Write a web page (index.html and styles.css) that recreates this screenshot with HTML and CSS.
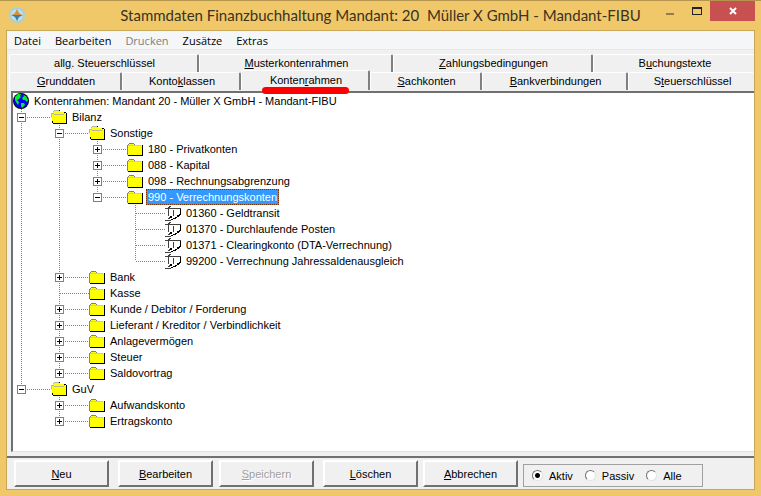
FILE: index.html
```html
<!DOCTYPE html>
<html lang="de">
<head>
    <meta charset="UTF-8">
    <meta name="viewport" content="width=device-width, initial-scale=1.0">
    <title>Stammdaten Finanzbuchhaltung</title>
    <link rel="stylesheet" href="styles.css">
</head>
<body>
    <!-- shared icons -->
    <svg class="defs" width="0" height="0">
        <symbol id="folder" viewBox="0 0 16 16" shape-rendering="crispEdges">
            <path d="M1 4h1v-1h1v-1h4v1h1v1h7v10h-14z" fill="#ffff00"/>
            <path d="M0 4h1v10h-1zM1 3h1v1h-1zM2 2h5v1h-5zM7 3h1v1h-1zM8 4h6v1h-6z" fill="#808080"/>
            <path d="M1 4h13v1h-13z" fill="#c8c8c8"/>
            <path d="M15 4h1v11h-15v-1h14z" fill="#000"/>
        </symbol>
        <symbol id="folder-open" viewBox="0 0 16 16" shape-rendering="crispEdges">
            <path d="M2 3h1v-1h6v1h5v2h1v9h-13v-1h-1v-4h-1v-4h2z" fill="#ffff00"/>
            <path d="M3 1h5v1h-5zM2 2h1v1h-1zM0 4h3v1h-3zM3 5h10v-1h1v1h-1v1h-10zM0 5h1v3h-1z" fill="#b8b8a0"/>
            <path d="M8 1h1v1h-1zM13 3h2v1h-2zM15 4h1v11h-1zM2 14h13v1h-13zM1 12h1v2h-1z" fill="#000"/>
        </symbol>
        <symbol id="konto" viewBox="0 0 16 16" shape-rendering="crispEdges">
            <path d="M3 4h12v6l-5 5h-7z" fill="#fff"/>
            <path d="M0 3h16v1h-16zM3 2h2v1h-2zM4 1h2v1h-2zM3 4h1v7h-1zM8 5h1v6h-1zM0 15h6v1h-6zM3 13h2v1h-2zM4 12h2v1h-2z" fill="#404040"/>
            <path d="M15 4h1v6h-1zM14 9h1v2h-1zM12 10h2v2h-2zM10 12h2v1h-2zM8 13h3v1h-3zM6 14h2v1h-2zM5 11h2v2h-2z" fill="#000"/>
        </symbol>
    </svg>

    <div class="window">
        <header class="titlebar">
            <svg class="logo" width="16" height="16" viewBox="0 0 16 16">
                <circle cx="8" cy="8" r="8" fill="#a9cfdd"/>
                <circle cx="8" cy="8" r="6" fill="#c3dde5"/>
                <path d="M8 2l2 4 3 2h-10l3-2z" fill="#d2913c"/>
                <path d="M2 8h12l-4 2-2 4-2-4z" fill="#3c7f9f"/>
            </svg>
            <h1>Stammdaten Finanzbuchhaltung Mandant: 20&nbsp; Müller X GmbH - Mandant-FIBU</h1>
            <div class="controls">
                <button type="button" aria-label="Minimieren">
                    <svg width="8" height="16"><path d="M0 12h8v2h-8z" fill="#937b4b"/></svg>
                </button>
                <button type="button" aria-label="Maximieren">
                    <svg width="10" height="16"><path d="M0 6h10v8h-10zM1 8v5h8v-5z" fill="#222" fill-rule="evenodd"/></svg>
                </button>
                <button type="button" class="close" aria-label="Schließen">
                    <svg width="8" height="8"><path d="M1 1l6 6M7 1l-6 6" stroke="#fff" stroke-width="2"/></svg>
                </button>
            </div>
        </header>

        <main class="client">
            <nav class="menu">
                <button type="button">Datei</button>
                <button type="button">Bearbeiten</button>
                <button type="button" disabled>Drucken</button>
                <button type="button">Zusätze</button>
                <button type="button">Extras</button>
            </nav>

            <div class="tabs" role="tablist">
                <div class="tab-row back">
                    <button type="button" role="tab">all<u>g</u>. Steuerschlüssel</button>
                    <button type="button" role="tab"><u>M</u>usterkontenrahmen</button>
                    <button type="button" role="tab"><u>Z</u>ahlungsbedingungen</button>
                    <button type="button" role="tab">B<u>u</u>chungstexte</button>
                </div>
                <div class="tab-row front">
                    <button type="button" role="tab"><u>G</u>runddaten</button>
                    <button type="button" role="tab">Konto<u>k</u>lassen</button>
                    <button type="button" role="tab" class="selected" aria-selected="true">Konten<u>r</u>ahmen<span class="marker"></span></button>
                    <button type="button" role="tab"><u>S</u>achkonten</button>
                    <button type="button" role="tab"><u>B</u>ankverbindungen</button>
                    <button type="button" role="tab">S<u>t</u>euerschlüssel</button>
                </div>
            </div>

            <section class="tree">
                <div class="row root">
                    <svg width="16" height="16" viewBox="0 0 16 16">
                        <circle cx="8" cy="8" r="8" fill="#000"/>
                        <circle cx="8" cy="8" r="7" fill="#0000ff"/>
                        <path d="M2 4l3-3 3 0-1 2 1 1-2 2-2 1 2 2-1 3-2-3-1-2zM10 2l3 1 2 4-1 2-2-2-2 0-1-2 2-2zM8 10l3 0 1 2-3 3-1-2z" fill="#00f030"/>
                    </svg>
                    <span class="label">Kontenrahmen: Mandant 20 - Müller X GmbH - Mandant-FIBU</span>
                </div>
                <ul>
                    <li>
                        <div class="row"><button type="button" class="toggle" aria-label="Zuklappen"></button><i class="line"></i><svg width="16" height="16"><use href="#folder-open"/></svg><span class="label">Bilanz</span></div>
                        <ul>
                            <li>
                                <div class="row"><button type="button" class="toggle" aria-label="Zuklappen"></button><i class="line"></i><svg width="16" height="16"><use href="#folder-open"/></svg><span class="label">Sonstige</span></div>
                                <ul>
                                    <li><div class="row"><button type="button" class="toggle plus" aria-label="Aufklappen"></button><i class="line"></i><svg width="16" height="16"><use href="#folder"/></svg><span class="label">180 - Privatkonten</span></div></li>
                                    <li><div class="row"><button type="button" class="toggle plus" aria-label="Aufklappen"></button><i class="line"></i><svg width="16" height="16"><use href="#folder"/></svg><span class="label">088 - Kapital</span></div></li>
                                    <li><div class="row"><button type="button" class="toggle plus" aria-label="Aufklappen"></button><i class="line"></i><svg width="16" height="16"><use href="#folder"/></svg><span class="label">098 - Rechnungsabgrenzung</span></div></li>
                                    <li>
                                        <div class="row"><button type="button" class="toggle" aria-label="Zuklappen"></button><i class="line"></i><svg width="16" height="16"><use href="#folder"/></svg><span class="label active">990 - Verrechnungskonten</span></div>
                                        <ul>
                                            <li><div class="row leaf"><i class="line"></i><svg width="16" height="16"><use href="#konto"/></svg><span class="label">01360 - Geldtransit</span></div></li>
                                            <li><div class="row leaf"><i class="line"></i><svg width="16" height="16"><use href="#konto"/></svg><span class="label">01370 - Durchlaufende Posten</span></div></li>
                                            <li><div class="row leaf"><i class="line"></i><svg width="16" height="16"><use href="#konto"/></svg><span class="label">01371 - Clearingkonto (DTA-Verrechnung)</span></div></li>
                                            <li><div class="row leaf"><i class="line"></i><svg width="16" height="16"><use href="#konto"/></svg><span class="label">99200 - Verrechnung Jahressaldenausgleich</span></div></li>
                                        </ul>
                                    </li>
                                </ul>
                            </li>
                            <li><div class="row"><button type="button" class="toggle plus" aria-label="Aufklappen"></button><i class="line"></i><svg width="16" height="16"><use href="#folder"/></svg><span class="label">Bank</span></div></li>
                            <li><div class="row leaf"><i class="line"></i><svg width="16" height="16"><use href="#folder"/></svg><span class="label">Kasse</span></div></li>
                            <li><div class="row"><button type="button" class="toggle plus" aria-label="Aufklappen"></button><i class="line"></i><svg width="16" height="16"><use href="#folder"/></svg><span class="label">Kunde / Debitor / Forderung</span></div></li>
                            <li><div class="row"><button type="button" class="toggle plus" aria-label="Aufklappen"></button><i class="line"></i><svg width="16" height="16"><use href="#folder"/></svg><span class="label">Lieferant / Kreditor / Verbindlichkeit</span></div></li>
                            <li><div class="row"><button type="button" class="toggle plus" aria-label="Aufklappen"></button><i class="line"></i><svg width="16" height="16"><use href="#folder"/></svg><span class="label">Anlagevermögen</span></div></li>
                            <li><div class="row"><button type="button" class="toggle plus" aria-label="Aufklappen"></button><i class="line"></i><svg width="16" height="16"><use href="#folder"/></svg><span class="label">Steuer</span></div></li>
                            <li><div class="row"><button type="button" class="toggle plus" aria-label="Aufklappen"></button><i class="line"></i><svg width="16" height="16"><use href="#folder"/></svg><span class="label">Saldovortrag</span></div></li>
                        </ul>
                    </li>
                    <li>
                        <div class="row"><button type="button" class="toggle" aria-label="Zuklappen"></button><i class="line"></i><svg width="16" height="16"><use href="#folder-open"/></svg><span class="label">GuV</span></div>
                        <ul>
                            <li><div class="row"><button type="button" class="toggle plus" aria-label="Aufklappen"></button><i class="line"></i><svg width="16" height="16"><use href="#folder"/></svg><span class="label">Aufwandskonto</span></div></li>
                            <li><div class="row"><button type="button" class="toggle plus" aria-label="Aufklappen"></button><i class="line"></i><svg width="16" height="16"><use href="#folder"/></svg><span class="label">Ertragskonto</span></div></li>
                        </ul>
                    </li>
                </ul>
            </section>

            <footer class="actions">
                <button type="button"><u>N</u>eu</button>
                <button type="button"><u>B</u>earbeiten</button>
                <button type="button" disabled><u>S</u>peichern</button>
                <button type="button"><u>L</u>öschen</button>
                <button type="button"><u>A</u>bbrechen</button>
                <div class="filter" role="radiogroup" aria-label="Status">
                    <label><input type="radio" name="status" checked>Aktiv</label>
                    <label><input type="radio" name="status">Passiv</label>
                    <label><input type="radio" name="status">Alle</label>
                </div>
            </footer>
        </main>
    </div>
</body>
</html>
```
FILE: styles.css
```css
* {
    box-sizing: border-box;
}
body {
    margin: 0;
    font-family: "Liberation Sans", Arial, sans-serif;
    font-size: 11px;
    color: #000;
}
button {
    font: inherit;
    color: inherit;
    margin: 0;
    padding: 0;
    border: none;
    background: none;
}
.defs {
    position: absolute;
}

/* window frame */
.window {
    display: flex;
    flex-direction: column;
    min-height: 100vh;
    padding: 0 6px 6px;
    background-color: #f0c869;
    border-top: 1px solid #b5954d;
}
.titlebar {
    display: flex;
    height: 29px;
}
.logo {
    margin: 6px 0 0 3px;
}
.titlebar h1 {
    flex: 1;
    margin: 0;
    padding-left: 80px;
    font-family: Lato, "Open Sans", sans-serif;
    font-size: 15px;
    font-weight: normal;
    line-height: 29px;
    text-align: center;
    white-space: nowrap;
    color: #3a3222;
}
.controls {
    display: flex;
    align-items: flex-start;
}
.controls button {
    display: flex;
    justify-content: center;
    width: 26px;
    height: 20px;
}
.controls button:first-child {
    width: 28px;
}
.controls svg {
    display: block;
}
.controls .close {
    align-items: center;
    width: 45px;
    background-color: #c75050;
}
.client {
    flex: 1;
    display: flex;
    flex-direction: column;
    border: 1px solid #c9a556;
    background-color: #f0f0f0;
}

/* menu */
.menu {
    display: flex;
    gap: 14px;
    height: 19px;
    padding-left: 7px;
    font-family: "Open Sans", "Noto Sans", sans-serif;
    background-color: #f5f6f7;
    border-bottom: 1px solid #e8e8e8;
}
.menu button:disabled {
    color: #808080;
}

/* tabs */
.tabs {
    padding: 4px 0 0 2px;
}
.tab-row {
    display: grid;
    height: 18px;
}
.back {
    grid-template-columns: 190fr 194fr 200fr 161fr;
}
.front {
    grid-template-columns: 113fr 119fr 129fr 112fr 146fr 126fr;
}
.tab-row button {
    padding: 0 0 2px 2px;
    border: 1px solid #fff;
    border-bottom: none;
    border-right: 2px solid #808080;
    border-radius: 2px 2px 0 0;
}
.tab-row button:last-child {
    border-right: none;
}
.tab-row .selected {
    position: relative;
    height: 20px;
    margin-top: -2px;
    background-color: #f0f0f0;
}
.marker {
    position: absolute;
    left: 20px;
    right: 19px;
    bottom: -4px;
    height: 7px;
    border-radius: 4px;
    background-color: #ff0000;
}

/* tree */
.tree {
    flex: 1;
    margin: 1px 0 4px 4px;
    padding-bottom: 16px;
    background-color: #fff;
    border-top: 2px solid #707070;
    border-left: 2px solid #707070;
    border-bottom: 1px solid #e0e0e0;
}
.tree ul {
    margin: 0;
    padding-left: 38px;
    list-style: none;
}
.tree > ul {
    padding-left: 4px;
}
.tree li:not(:last-child) {
    background-image: linear-gradient(#808080 50%, transparent 50%);
    background-size: 1px 2px;
    background-position: 4px 0;
    background-repeat: repeat-y;
}
/* the last branch stops at the middle of its row */
.tree li:last-child > .row {
    background-image: linear-gradient(#fff, #fff), linear-gradient(#808080 50%, transparent 50%);
    background-size: 9px 8px, 1px 2px;
    background-position: 0 8px, 4px 0;
    background-repeat: no-repeat, repeat-y;
}
.row {
    display: flex;
    align-items: center;
    height: 16px;
}
.toggle {
    width: 9px;
    height: 9px;
    border: 1px solid #808080;
    background: linear-gradient(#000, #000) center / 5px 1px no-repeat #fff;
}
.plus {
    background: linear-gradient(#000, #000) center / 5px 1px no-repeat, linear-gradient(#000, #000) center / 1px 5px no-repeat #fff;
}
.line {
    width: 25px;
    height: 1px;
    background: linear-gradient(90deg, transparent 50%, #808080 50%) 0 0 / 2px 1px;
}
.leaf .line {
    width: 30px;
    margin-left: 4px;
}
.label {
    margin-left: 3px;
    padding: 0 2px;
    line-height: 16px;
    white-space: nowrap;
}
.active {
    color: #fff;
    background-color: #3399ff;
    outline: 1px dotted #803000;
    outline-offset: -1px;
}

/* bottom bar */
.actions {
    display: grid;
    grid-template-columns: 104px 101px 104px 100px 100px 180px;
    height: 33px;
    padding: 2px 0 2px 7px;
    border-top: 2px solid #707070;
}
.actions > button {
    width: 95px;
    border: 2px solid;
    border-color: #fff #707070 #707070 #fff;
}
.actions button:disabled {
    color: #a0a0a0;
    text-shadow: 1px 1px #fff;
}
.filter {
    display: flex;
    align-items: center;
    gap: 12px;
    height: 23px;
    margin-top: 4px;
    padding: 0 8px;
    border: 1px solid #a0a0a0;
}
.filter label {
    display: flex;
    align-items: center;
    gap: 6px;
}
.filter input {
    appearance: none;
    width: 11px;
    height: 11px;
    margin: 0;
    border: 1px solid;
    border-color: #707070 #e3e3e3 #e3e3e3 #707070;
    border-radius: 50%;
    background-color: #fff;
}
.filter input:checked {
    background-image: radial-gradient(#000 2px, transparent 3px);
}
```
